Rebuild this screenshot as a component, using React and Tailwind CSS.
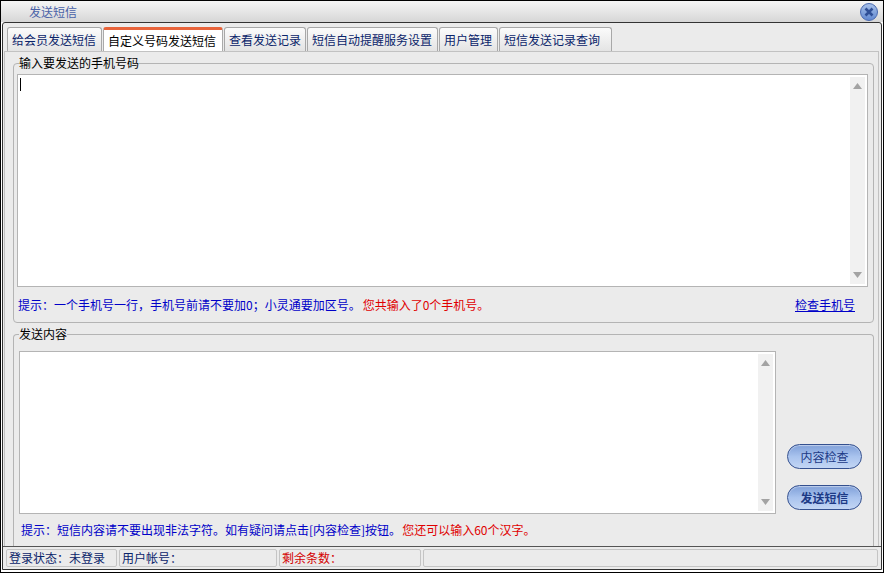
const cjk = { fontFamily: '"Noto Sans CJK SC", sans-serif' };

const tabs = [
  { label: "给会员发送短信", width: "w-[95px]" },
  { label: "自定义号码发送短信", width: "w-[120px]", active: true },
  { label: "查看发送记录", width: "w-[82px]" },
  { label: "短信自动提醒服务设置", width: "w-[131px]" },
  { label: "用户管理", width: "w-[59px]" },
  { label: "短信发送记录查询", width: "w-[113px]" },
];

const Tab = ({ label, width, active }) => (
  <div
    className={`${width} h-[24px] flex items-center pl-[4px] rounded-t-[3px] border border-b-0 text-[12px] ${
      active
        ? "border-[#aaaaaa] border-t-[3px] border-t-[#e8633a] bg-white text-black"
        : "border-[#a8a8a8] bg-gradient-to-b from-[#fbfbfb] to-[#e4e4e4] text-[#0a246a]"
    }`}
  >
    {label}
  </div>
);

const ScrollBar = () => (
  <div className="w-[15px] my-[2px] mr-[2px] bg-[#f1f1f1] flex flex-col items-center justify-between py-[6px]">
    <svg width="9" height="6" viewBox="0 0 9 6">
      <path d="M4.5 0L9 6H0z" fill="#a3a3a3" />
    </svg>
    <svg width="9" height="6" viewBox="0 0 9 6">
      <path d="M0 0h9L4.5 6z" fill="#a3a3a3" />
    </svg>
  </div>
);

const PillButton = ({ children, bold }) => (
  <button
    className={`w-[75px] h-[25px] rounded-full border border-[#34508f] bg-gradient-to-b from-[#7f9fd8] via-[#a9c3ee] to-[#c3d6f4] shadow-[inset_0_1px_1px_#ffffff80] text-[12px] text-[#1c3a86] ${
      bold ? "font-bold" : ""
    }`}
  >
    {children}
  </button>
);

const StatusCell = ({ width, children, red }) => (
  <div
    className={`${width} h-[18px] flex items-center pl-[2px] rounded-[2px] border border-[#c4c4c4] text-[12px] ${
      red ? "text-[#d40000]" : "text-[#0a246a]"
    }`}
  >
    {children}
  </div>
);

export default function App() {
  return (
    <div
      className="w-[884px] h-[573px] bg-white border border-black flex flex-col overflow-hidden"
      style={cjk}
    >
      {/* Title bar */}
      <div className="h-[21px] shrink-0 flex items-center justify-between pl-[28px] pr-[5px] bg-gradient-to-b from-[#f6f6f6] to-[#d6d6d6]">
        <span className="text-[12px] text-[#4a62a8]">发送短信</span>
        <svg width="18" height="18" viewBox="0 0 18 18">
          <defs>
            <linearGradient id="closeFill" x1="0" y1="0" x2="0" y2="1">
              <stop offset="0" stopColor="#a9c2ea" />
              <stop offset="1" stopColor="#5f86cf" />
            </linearGradient>
          </defs>
          <circle cx="9" cy="9" r="8.5" fill="url(#closeFill)" stroke="#4a6ab0" />
          <path d="M5.5 5.5l7 7M12.5 5.5l-7 7" stroke="#2f4f96" strokeWidth="2.6" />
        </svg>
      </div>

      {/* Window body */}
      <div className="flex-1 flex flex-col mx-px mb-[2px] border border-[#333333] rounded-tl-[3px] rounded-tr-[3px] bg-[#ebebeb]">
        {/* Tab strip */}
        <div className="h-[28px] shrink-0 flex items-end gap-[1px] pl-[4px]">
          {tabs.map((t) => (
            <Tab key={t.label} {...t} />
          ))}
        </div>

        {/* Tab page */}
        <div className="flex-1 flex flex-col mr-[2px] ml-[1px] pl-[8px] pr-[4px] pt-[4px] border-t border-r border-l border-[#c2c2c2]">
          <fieldset className="h-[267px] border border-[#b4b4b4] rounded-[4px] pl-[3px] pr-[5px]">
            <legend className="ml-[2px] text-[12px] leading-[14px] text-black">输入要发送的手机号码</legend>
            <div className="h-[213px] mt-[4px] flex justify-between bg-white border border-[#b4b4b4]">
              <div className="w-px h-[13px] ml-[2px] mt-[3px] bg-black" />
              <ScrollBar />
            </div>
            <div className="h-[35px] flex items-center justify-between pl-[1px] pr-[13px] text-[12px]">
              <div>
                <span className="text-[#0000c8]">提示：一个手机号一行，手机号前请不要加0；小灵通要加区号。</span>
                <span className="text-[#e00000] ml-[2px]">您共输入了0个手机号。</span>
              </div>
              <a className="text-[#0000c8] underline">检查手机号</a>
            </div>
          </fieldset>

          <fieldset className="flex-1 border border-b-0 border-[#b4b4b4] rounded-t-[4px] mt-[4px] pl-[5px] pr-[11px]">
            <legend className="text-[12px] leading-[14px] text-black">发送内容</legend>
            <div className="flex justify-between">
              <div className="w-[757px] h-[163px] mt-[10px] flex justify-end bg-white border border-[#b4b4b4]">
                <ScrollBar />
              </div>
              <div className="flex flex-col justify-end gap-[16px] pb-[4px]">
                <PillButton>内容检查</PillButton>
                <PillButton bold>发送短信</PillButton>
              </div>
            </div>
            <div className="h-[32px] flex items-center pl-[2px] text-[12px]">
              <span className="text-[#0000c8]">提示：短信内容请不要出现非法字符。如有疑问请点击[内容检查]按钮。</span>
              <span className="text-[#e00000] ml-[1px]">您还可以输入60个汉字。</span>
            </div>
          </fieldset>
        </div>

        {/* Status bar */}
        <div className="h-[23px] shrink-0 flex items-center gap-[2px] pl-[3px] pr-[3px] border-t border-[#555555]">
          <StatusCell width="w-[111px]">登录状态：未登录</StatusCell>
          <StatusCell width="w-[158px]">用户帐号：</StatusCell>
          <StatusCell width="w-[142px]" red>
            剩余条数：
          </StatusCell>
          <StatusCell width="flex-1" />
        </div>
      </div>
    </div>
  );
}
